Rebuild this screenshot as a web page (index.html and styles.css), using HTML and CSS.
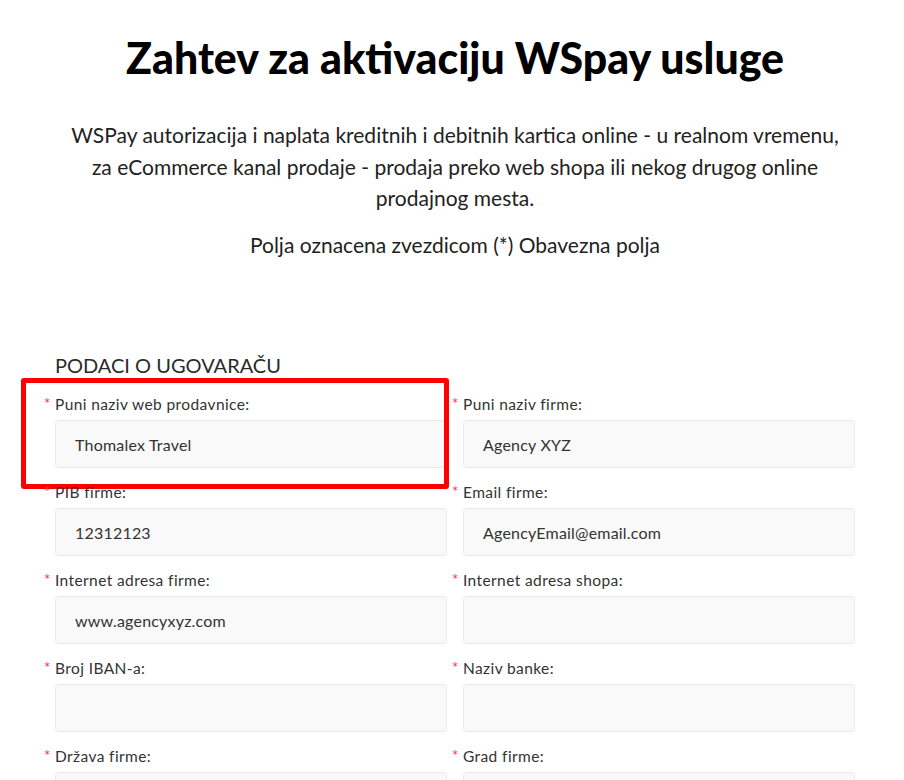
FILE: index.html
```html
<!DOCTYPE html>
<html lang="sr">
<head>
<meta charset="utf-8">
<title>Zahtev za aktivaciju WSpay usluge</title>
<link rel="stylesheet" href="styles.css">
</head>
<body>
<main class="page">
  <h1 class="title">Zahtev za aktivaciju WSpay usluge</h1>
  <p class="intro">WSPay autorizacija i naplata kreditnih i debitnih kartica online - u realnom vremenu, za eCommerce kanal prodaje - prodaja preko web shopa ili nekog drugog online prodajnog mesta.</p>
  <p class="note">Polja oznacena zvezdicom (*) Obavezna polja</p>

  <section class="form-section">
    <h2 class="section-title">PODACI O UGOVARAČU</h2>
    <div class="grid">
      <div class="field highlighted">
        <label class="label"><span class="req">*</span>Puni naziv web prodavnice:</label>
        <div class="input">Thomalex Travel</div>
        <span class="highlight-box"></span>
      </div>
      <div class="field">
        <label class="label"><span class="req">*</span>Puni naziv firme:</label>
        <div class="input">Agency XYZ</div>
      </div>
      <div class="field">
        <label class="label"><span class="req">*</span>PIB firme:</label>
        <div class="input">12312123</div>
      </div>
      <div class="field">
        <label class="label"><span class="req">*</span>Email firme:</label>
        <div class="input">AgencyEmail@email.com</div>
      </div>
      <div class="field">
        <label class="label"><span class="req">*</span>Internet adresa firme:</label>
        <div class="input">www.agencyxyz.com</div>
      </div>
      <div class="field">
        <label class="label"><span class="req">*</span>Internet adresa shopa:</label>
        <div class="input"></div>
      </div>
      <div class="field">
        <label class="label"><span class="req">*</span>Broj IBAN-a:</label>
        <div class="input"></div>
      </div>
      <div class="field">
        <label class="label"><span class="req">*</span>Naziv banke:</label>
        <div class="input"></div>
      </div>
      <div class="field">
        <label class="label"><span class="req">*</span>Država firme:</label>
        <div class="input"></div>
      </div>
      <div class="field">
        <label class="label"><span class="req">*</span>Grad firme:</label>
        <div class="input"></div>
      </div>
    </div>
  </section>
</main>
</body>
</html>
```

FILE: styles.css
```css
* { box-sizing: border-box; }
html, body { margin: 0; padding: 0; background: #fff; }
body {
  font-family: "Lato", "Noto Sans", sans-serif;
  color: #222;
}
.page {
  width: 800px;
  margin-left: 55px;
  padding-top: 33px;
}
.title {
  margin: 0;
  text-align: center;
  font-family: "Lato", sans-serif;
  font-weight: 900;
  font-size: 42.8px;
  line-height: 50px;
  color: #000;
}
.intro {
  margin: 36px 0 0;
  padding: 0 15px;
  text-align: center;
  font-size: 21px;
  line-height: 31.5px;
  font-weight: 400;
  color: #222;
}
.note {
  margin: 15px 0 0;
  text-align: center;
  font-size: 21px;
  line-height: 31.5px;
  color: #222;
}
.form-section {
  margin-top: 92px;
}
.section-title {
  margin: 0 0 16px;
  font-size: 20px;
  line-height: 26px;
  font-weight: 400;
  color: #2a2a2a;
}
.grid {
  display: grid;
  grid-template-columns: 1fr 1fr;
  column-gap: 16px;
}
.field {
  position: relative;
  padding-bottom: 14px;
}
.label {
  display: block;
  position: relative;
  font-size: 15.5px;
  letter-spacing: 0.4px;
  line-height: 20px;
  color: #333;
  margin-bottom: 6px;
}
.req {
  position: absolute;
  left: -11px;
  top: -1px;
  color: #ff2d55;
  font-size: 15px;
  letter-spacing: 0;
}
.input {
  height: 48px;
  background: #f9f9f9;
  border: 1px solid #e9e9e9;
  border-radius: 4px;
  padding: 0 19px;
  display: flex;
  align-items: center;
  font-size: 16px;
  letter-spacing: 0.2px;
  color: #333;
}
.highlight-box {
  position: absolute;
  left: -34px;
  top: -16px;
  width: 428px;
  height: 111px;
  border: 5px solid #ff0000;
  border-radius: 3px;
  pointer-events: none;
}
```
